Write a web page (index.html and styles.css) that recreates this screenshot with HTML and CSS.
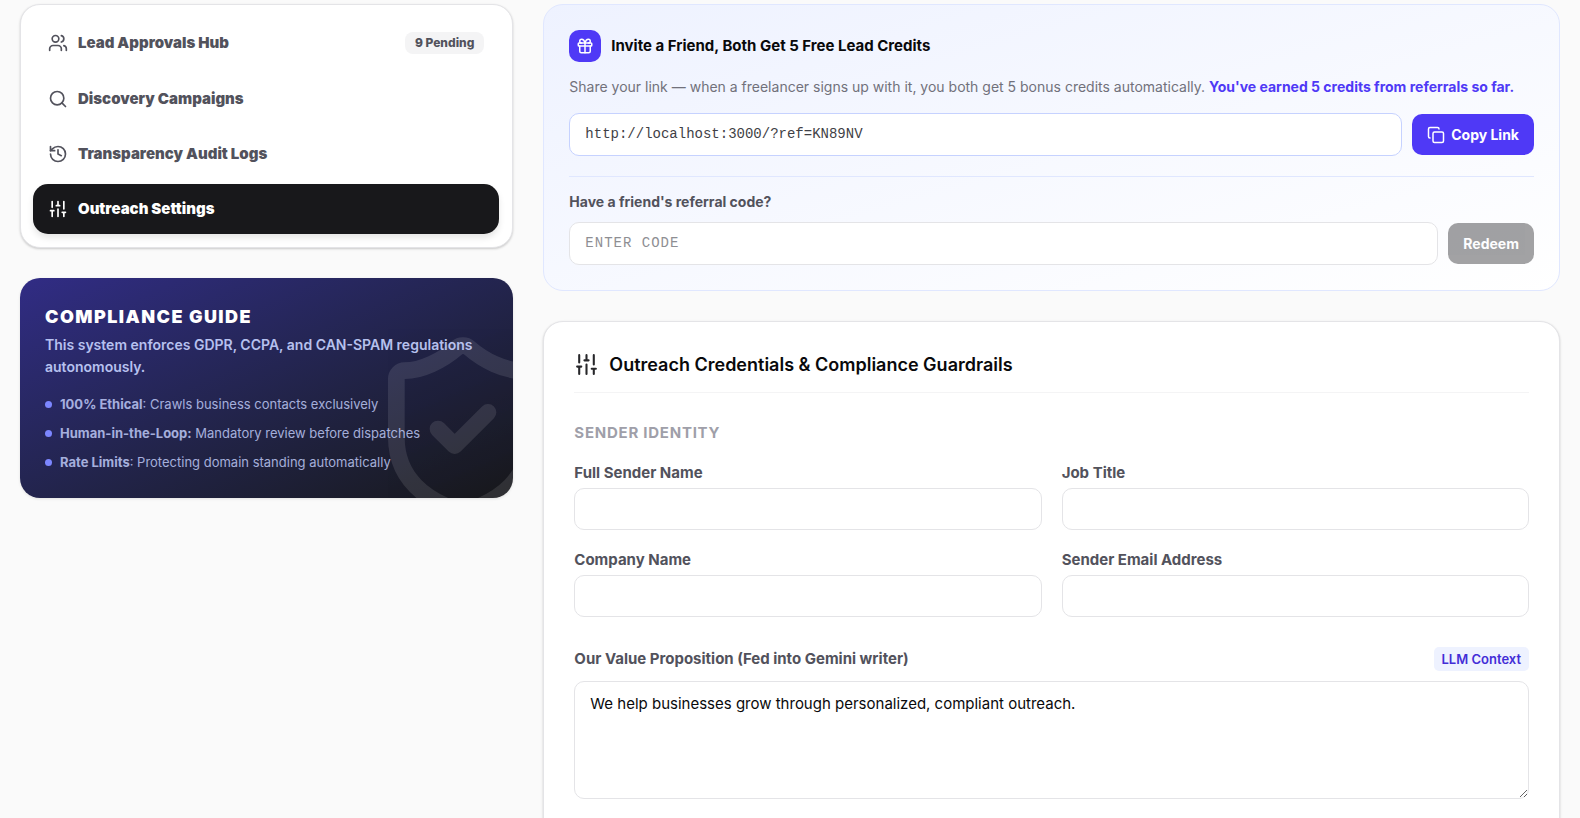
FILE: index.html
```html
<!DOCTYPE html>
<html lang="en">
<head>
    <meta charset="UTF-8">
    <meta name="viewport" content="width=device-width, initial-scale=1.0">
    <title>Outreach Settings</title>
    <link rel="stylesheet" href="styles.css">
</head>
<body>
    <div class="layout">
        <aside class="sidebar">
            <nav class="card nav">
                <button type="button" class="nav-item">
                    <svg class="icon" viewBox="0 0 24 24"><path d="M16 21v-2a4 4 0 0 0-4-4H6a4 4 0 0 0-4 4v2"/><circle cx="9" cy="7" r="4"/><path d="M22 21v-2a4 4 0 0 0-3-3.87"/><path d="M16 3.13a4 4 0 0 1 0 7.75"/></svg>
                    <span>Lead Approvals Hub</span>
                    <span class="pending">9 Pending</span>
                </button>
                <button type="button" class="nav-item">
                    <svg class="icon" viewBox="0 0 24 24"><circle cx="11" cy="11" r="8"/><path d="m21 21-4.34-4.34"/></svg>
                    <span>Discovery Campaigns</span>
                </button>
                <button type="button" class="nav-item">
                    <svg class="icon" viewBox="0 0 24 24"><path d="M3 12a9 9 0 1 0 9-9 9.75 9.75 0 0 0-6.74 2.74L3 8"/><path d="M3 3v5h5"/><path d="M12 7v5l4 2"/></svg>
                    <span>Transparency Audit Logs</span>
                </button>
                <button type="button" class="nav-item active">
                    <svg class="icon" viewBox="0 0 24 24"><path d="M10 8h4M12 21v-9M12 8V3M17 16h4M19 12V3M19 21v-5M3 14h4M5 10V3M5 21v-7"/></svg>
                    <span>Outreach Settings</span>
                </button>
            </nav>

            <section class="guide">
                <svg class="guide-shield" viewBox="0 0 24 24"><path d="M20 13c0 5-3.5 7.5-7.66 8.95a1 1 0 0 1-.67-.01C7.5 20.5 4 18 4 13V6a1 1 0 0 1 1-1c2 0 4.5-1.2 6.24-2.72a1.17 1.17 0 0 1 1.52 0C14.51 3.81 17 5 19 5a1 1 0 0 1 1 1z"/><path d="m9 12 2 2 4-4"/></svg>
                <div class="guide-body">
                    <h2>Compliance Guide</h2>
                    <p>This system enforces GDPR, CCPA, and CAN-SPAM regulations autonomously.</p>
                    <ul>
                        <li><span><strong>100% Ethical</strong>: Crawls business contacts exclusively</span></li>
                        <li><span><strong>Human-in-the-Loop:</strong> Mandatory review before dispatches</span></li>
                        <li><span><strong>Rate Limits</strong>: Protecting domain standing automatically</span></li>
                    </ul>
                </div>
            </section>
        </aside>

        <main class="content">
            <section class="referral">
                <div class="referral-head">
                    <span class="gift">
                        <svg class="icon" viewBox="0 0 24 24"><rect x="3" y="8" width="18" height="4" rx="1"/><path d="M12 8v13"/><path d="M19 12v7a2 2 0 0 1-2 2H7a2 2 0 0 1-2-2v-7"/><path d="M7.5 8a2.5 2.5 0 0 1 0-5A4.8 8 0 0 1 12 8a4.8 8 0 0 1 4.5-5 2.5 2.5 0 0 1 0 5"/></svg>
                    </span>
                    <h3>Invite a Friend, Both Get 5 Free Lead Credits</h3>
                </div>
                <p class="referral-text">Share your link — when a freelancer signs up with it, you both get 5 bonus credits automatically. <strong>You've earned 5 credits from referrals so far.</strong></p>
                <div class="row">
                    <input type="text" class="input mono link-input" aria-label="Referral link" value="http://localhost:3000/?ref=KN89NV" readonly>
                    <button type="button" class="btn btn-primary">
                        <svg class="icon" viewBox="0 0 24 24"><rect x="8" y="8" width="14" height="14" rx="2"/><path d="M4 16c-1.1 0-2-.9-2-2V4c0-1.1.9-2 2-2h10c1.1 0 2 .9 2 2"/></svg>
                        Copy Link
                    </button>
                </div>
                <div class="redeem">
                    <label for="code">Have a friend's referral code?</label>
                    <div class="row">
                        <input type="text" id="code" class="input mono code-input" placeholder="ENTER CODE">
                        <button type="button" class="btn btn-dark" disabled>Redeem</button>
                    </div>
                </div>
            </section>

            <form class="card settings">
                <div class="settings-head">
                    <svg class="icon" viewBox="0 0 24 24"><path d="M10 8h4M12 21v-9M12 8V3M17 16h4M19 12V3M19 21v-5M3 14h4M5 10V3M5 21v-7"/></svg>
                    <h2>Outreach Credentials &amp; Compliance Guardrails</h2>
                </div>

                <h3 class="section-title">Sender Identity</h3>
                <div class="fields">
                    <div class="field">
                        <label for="sender-name">Full Sender Name</label>
                        <input type="text" id="sender-name" class="input">
                    </div>
                    <div class="field">
                        <label for="job-title">Job Title</label>
                        <input type="text" id="job-title" class="input">
                    </div>
                    <div class="field">
                        <label for="company">Company Name</label>
                        <input type="text" id="company" class="input">
                    </div>
                    <div class="field">
                        <label for="email">Sender Email Address</label>
                        <input type="email" id="email" class="input">
                    </div>
                </div>

                <div class="value-head">
                    <label for="value-prop">Our Value Proposition (Fed into Gemini writer)</label>
                    <span class="context-tag">LLM Context</span>
                </div>
                <textarea id="value-prop" class="input" rows="4">We help businesses grow through personalized, compliant outreach.</textarea>
            </form>
        </main>
    </div>
</body>
</html>
```
FILE: styles.css
```css
* {
    box-sizing: border-box;
}
body {
    margin: 0;
    background-color: #fafafa;
    color: #09090b;
    font-family: Inter, "Liberation Sans", sans-serif;
    font-size: 15px;
    line-height: 20px;
}
h2, h3, p, ul {
    margin: 0;
    padding: 0;
}
button, input, textarea {
    font-family: inherit;
    font-size: inherit;
    line-height: inherit;
}
label {
    color: #52525c;
    font-weight: 700;
}
.icon {
    flex-shrink: 0;
    width: 20px;
    height: 20px;
    fill: none;
    stroke: currentColor;
    stroke-width: 2;
    stroke-linecap: round;
    stroke-linejoin: round;
}
.layout {
    display: grid;
    grid-template-columns: repeat(12, minmax(0, 1fr));
    gap: 30px;
    align-items: start;
    padding: 4px 20px 30px;
}
.sidebar {
    grid-column: span 4;
    display: grid;
    gap: 30px;
}
.content {
    grid-column: span 8;
    display: grid;
    gap: 30px;
}
.card {
    background-color: #fff;
    border: 1px solid #e4e4e7;
    border-radius: 20px;
    box-shadow: 0 1px 3px rgba(0,0,0,0.1), 0 1px 2px rgba(0,0,0,0.1);
}

/* Sidebar navigation */
.nav {
    display: grid;
    gap: 5px;
    padding: 12px 13px 13px 12px;
}
.nav-item {
    display: flex;
    align-items: center;
    gap: 10px;
    width: 100%;
    padding: 15px;
    border: none;
    border-radius: 15px;
    background: none;
    color: #52525c;
    font-weight: 900;
    text-align: left;
    cursor: pointer;
}
.nav-item.active {
    background-color: #18181b;
    color: #fff;
    box-shadow: 0 4px 6px rgba(0,0,0,0.1);
}
.pending {
    margin-left: auto;
    padding: 1px 10px;
    border-radius: 8px;
    background-color: #f4f4f5;
    font-size: 12px;
    font-weight: 800;
}

/* Compliance guide */
.guide {
    position: relative;
    overflow: hidden;
    padding: 25px;
    border-radius: 20px;
    background: linear-gradient(to bottom right in oklab, #312c85, #18181b);
    color: #c6d2ff;
    box-shadow: 0 1px 3px rgba(0,0,0,0.1);
}
.guide-shield {
    position: absolute;
    right: -50px;
    bottom: -31px;
    width: 200px;
    height: 200px;
    fill: none;
    stroke: #fff;
    stroke-width: 2;
    stroke-linecap: round;
    stroke-linejoin: round;
    opacity: 0.1;
}
.guide-body {
    position: relative;
}
.guide h2 {
    margin-bottom: 3px;
    color: #fff;
    font-size: 18px;
    font-weight: 900;
    line-height: 28px;
    letter-spacing: 0.08em;
    text-transform: uppercase;
}
.guide p {
    font-size: 14px;
    font-weight: 600;
    line-height: 22px;
    opacity: 0.9;
}
.guide ul {
    display: grid;
    gap: 9px;
    margin: 16px 0 1px;
    list-style: none;
    font-size: 13px;
}
.guide li {
    display: flex;
    align-items: center;
    gap: 8px;
}
.guide li span {
    opacity: 0.8;
}
.guide li::before {
    content: "";
    width: 7px;
    height: 7px;
    border-radius: 50%;
    background-color: #7c86ff;
}

/* Inputs and buttons */
.input {
    display: block;
    width: 100%;
    min-width: 0;
    padding: 10px 15px;
    border: 1px solid #e4e4e7;
    border-radius: 10px;
    background-color: #fff;
    color: #09090b;
}
.input.mono {
    font-family: "Liberation Mono", monospace;
    font-size: 14px;
    line-height: 21px;
}
.row {
    display: flex;
    align-items: center;
    gap: 10px;
}
.btn {
    display: flex;
    align-items: center;
    flex-shrink: 0;
    gap: 6px;
    padding: 10px 15px;
    border: none;
    border-radius: 10px;
    color: #fff;
    font-size: 14px;
    font-weight: 700;
    line-height: 21px;
    cursor: pointer;
}
.btn .icon {
    width: 18px;
    height: 18px;
}
.btn-primary {
    background-color: #4f39f6;
}
.btn-dark {
    background-color: #18181b;
}
.btn:disabled {
    opacity: 0.4;
}

/* Referral card */
.referral {
    padding: 25px;
    border: 1px solid #e0e7ff;
    border-radius: 20px;
    background: linear-gradient(to bottom right, #eef2ff, #fff);
}
.referral-head {
    display: flex;
    align-items: center;
    gap: 10px;
}
.referral-head h3 {
    font-size: 15px;
    font-weight: 700;
}
.gift {
    display: flex;
    align-items: center;
    justify-content: center;
    width: 32px;
    height: 32px;
    border-radius: 10px;
    background-color: #4f39f6;
    color: #fff;
}
.gift .icon {
    width: 18px;
    height: 18px;
}
.referral-text {
    margin: 15px 0 16px;
    color: #71717b;
    font-size: 14px;
}
.referral-text strong {
    color: #4f39f6;
    font-weight: 700;
}
.link-input {
    border-color: #c6d2ff;
    color: #3f3f46;
}
.code-input {
    letter-spacing: 1px;
}
.code-input::placeholder {
    color: #8e8e93;
}
.redeem {
    margin-top: 20px;
    padding-top: 15px;
    border-top: 1px solid #e0e7ff;
}
.redeem label {
    display: block;
    margin-bottom: 10px;
    font-size: 14px;
}

/* Settings form */
.settings {
    padding: 30px 30px 60px;
}
.settings-head {
    display: flex;
    align-items: center;
    gap: 10px;
    padding-bottom: 15px;
    border-bottom: 1px solid #f4f4f5;
}
.settings-head .icon {
    width: 25px;
    height: 25px;
    color: #27272a;
}
.settings-head h2 {
    font-size: 18px;
    font-weight: 600;
}
.section-title {
    margin: 30px 0 20px;
    color: #9f9fa9;
    font-size: 15px;
    font-weight: 700;
    letter-spacing: 0.05em;
    text-transform: uppercase;
}
.fields {
    display: grid;
    grid-template-columns: 1fr 1fr;
    gap: 20px;
}
.field {
    display: grid;
    gap: 5px;
}
.value-head {
    display: flex;
    align-items: center;
    justify-content: space-between;
    margin: 30px 0 10px;
}
.context-tag {
    padding: 2px 8px;
    border-radius: 5px;
    background-color: #eef2ff;
    color: #432dd7;
    font-size: 13px;
    font-weight: 600;
}
textarea.input {
    line-height: 24px;
    resize: vertical;
}
```
